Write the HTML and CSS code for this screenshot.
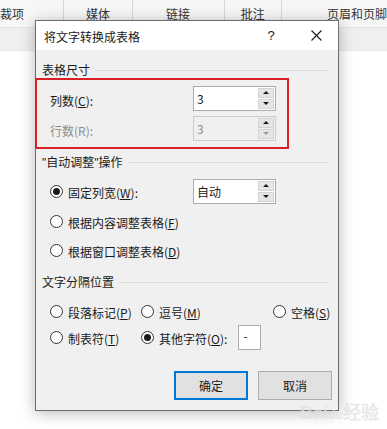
FILE: index.html
```html
<!DOCTYPE html>
<html lang="zh-CN">
<head>
<meta charset="utf-8">
<title>将文字转换成表格</title>
<link rel="stylesheet" href="styles.css">
</head>
<body>
<div class="app">
  <div class="ribbon">
    <div class="tab tab-first">裁项</div>
    <div class="tab tab-media">媒体</div>
    <div class="tab tab-link">链接</div>
    <div class="tab tab-note">批注</div>
    <div class="tab tab-last">页眉和页脚</div>
  </div>
  <div class="ribbon-sub"></div>

  <div class="dialog">
    <div class="titlebar">
      <span class="title">将文字转换成表格</span>
      <span class="help">?</span>
      <span class="close"><svg width="11" height="11" viewBox="0 0 11 11"><path d="M0.5 0.5L10.5 10.5M10.5 0.5L0.5 10.5" stroke="#1a1a1a" stroke-width="1.1" fill="none"/></svg></span>
    </div>
    <div class="content">
      <div class="group-label g1"><span>表格尺寸</span><i class="rule"></i></div>
      <div class="field-row r1">
        <span class="field-label">列数(<u>C</u>):</span>
        <div class="spin">
          <span class="spin-value">3</span>
          <span class="spin-btns"><span class="sb up"></span><span class="sb down"></span></span>
        </div>
      </div>
      <div class="field-row r2 disabled">
        <span class="field-label">行数(R):</span>
        <div class="spin">
          <span class="spin-value">3</span>
          <span class="spin-btns"><span class="sb up"></span><span class="sb down"></span></span>
        </div>
      </div>

      <div class="group-label g2"><span><b class="q">"</b>自动调整<b class="q">"</b>操作</span><i class="rule"></i></div>
      <div class="radio-row first">
        <span class="radio checked"></span><span class="rlabel">固定列宽(<u>W</u>):</span>
        <div class="spin combo">
          <span class="spin-value">自动</span>
          <span class="spin-btns"><span class="sb up"></span><span class="sb down"></span></span>
        </div>
      </div>
      <div class="radio-row second">
        <span class="radio"></span><span class="rlabel">根据内容调整表格(<u>F</u>)</span>
      </div>
      <div class="radio-row third">
        <span class="radio"></span><span class="rlabel">根据窗口调整表格(<u>D</u>)</span>
      </div>

      <div class="group-label g3"><span>文字分隔位置</span><i class="rule"></i></div>
      <div class="sep-grid">
        <div class="cell c1"><span class="radio"></span><span class="rlabel">段落标记(<u>P</u>)</span></div>
        <div class="cell c2"><span class="radio"></span><span class="rlabel">逗号(<u>M</u>)</span></div>
        <div class="cell c3"><span class="radio"></span><span class="rlabel">空格(<u>S</u>)</span></div>
        <div class="cell c1 low"><span class="radio"></span><span class="rlabel">制表符(<u>T</u>)</span></div>
        <div class="cell c2 low wide"><span class="radio checked"></span><span class="rlabel">其他字符(<u>O</u>):</span><span class="char-box">-</span></div>
      </div>

      <div class="buttons">
        <button class="btn default">确定</button>
        <button class="btn">取消</button>
      </div>
    </div>
    <div class="highlight"></div>
  </div>
  <div class="watermark">Bai<span class="paw">du</span>经验</div>
</div>
</body>
</html>
```

FILE: styles.css
```css
html, body {
  margin: 0;
  padding: 0;
  background: #ffffff;
}
body {
  font-family: "Noto Sans CJK SC", "Noto Sans", sans-serif;
  font-size: 12px;
  color: #1a1a1a;
}
.app {
  position: relative;
  width: 387px;
  height: 429px;
  overflow: hidden;
}

/* background ribbon */
.ribbon {
  display: flex;
  height: 28px;
  background: #f7f7f7;
  border-bottom: 1px solid #e4e4e4;
  box-sizing: border-box;
}
.tab {
  height: 28px;
  line-height: 28px;
  color: #333;
  font-size: 12px;
  border-right: 1px solid #d8d8d8;
  box-sizing: border-box;
  text-align: center;
  white-space: nowrap;
}
.tab-first { width: 65px; text-align: left; }
.tab-media { width: 69px; }
.tab-link { width: 93px; }
.tab-note { width: 58px; }
.tab-last { flex: 1; text-align: left; padding-left: 45px; border-right: 0; }
.ribbon-sub {
  height: 22px;
  background: #efefef;
  border-bottom: 1px solid #e6e6e6;
}

/* dialog window */
.dialog {
  position: absolute;
  left: 35px;
  top: 20px;
  width: 304px;
  height: 391px;
  box-sizing: border-box;
  border: 1px solid #6d6d6d;
  background: #f0f0f0;
  box-shadow: 0 2px 14px rgba(0, 0, 0, 0.28);
}
.titlebar {
  height: 29px;
  background: #ffffff;
  display: flex;
  align-items: center;
  padding-left: 8px;
  box-sizing: border-box;
}
.title { flex: 1; font-size: 12px; color: #1a1a1a; padding-top: 1px; }
.help {
  width: 14px;
  text-align: center;
  margin-right: 33px;
  font-size: 13px;
  font-family: "Liberation Sans", sans-serif;
}
.close {
  width: 11px;
  height: 11px;
  margin-right: 16px;
  display: flex;
}

.content {
  padding: 0 6px 0 6px;
  display: flex;
  flex-direction: column;
}
.group-label {
  height: 16px;
  line-height: 16px;
  display: flex;
  align-items: center;
  padding-right: 3px;
}
.group-label span { white-space: nowrap; margin-right: 5px; }
.group-label .q { font-weight: normal; font-family: "Liberation Sans", sans-serif; }
.group-label .rule { flex: 1; height: 1px; background: #dcdcdc; }
.g1 { margin-top: 12px; }
.g2 { margin-top: 13px; }
.g3 { margin-top: 14px; }

.field-row {
  display: flex;
  align-items: center;
  height: 25px;
  padding-left: 8px;
}
.r1 { margin-top: 8px; }
.r2 { margin-top: 5px; }
.field-label { width: 143px; padding-top: 3px; }
.disabled .field-label { color: #8d8d8d; }

.spin {
  width: 83px;
  height: 25px;
  box-sizing: border-box;
  border: 1px solid #acacac;
  background: #ffffff;
  display: flex;
  align-items: center;
  padding: 0 1px 0 3px;
}
.disabled .spin { background: #f0f0f0; border-color: #cccccc; color: #8d8d8d; }
.spin-value { flex: 1; font-size: 12px; }
.spin-btns {
  width: 16px;
  height: 21px;
  display: flex;
  flex-direction: column;
  gap: 1px;
}
.sb {
  flex: 1;
  background: #e5e5e5;
  border: 1px solid #d4d4d4;
  position: relative;
}
.sb::after {
  content: "";
  position: absolute;
  left: 50%;
  top: 50%;
  margin-left: -3px;
  margin-top: -2px;
  border-left: 3px solid transparent;
  border-right: 3px solid transparent;
}
.sb.up::after { border-bottom: 3px solid #1a1a1a; }
.sb.down::after { border-top: 3px solid #1a1a1a; }
.disabled .sb.down::after { border-top-color: #9a9a9a; }

.radio-row {
  display: flex;
  align-items: center;
  padding-left: 8px;
  height: 20px;
}
.radio-row.first { height: 26px; margin-top: 8px; }
.radio-row.second { margin-top: 7px; }
.radio-row.third { margin-top: 9px; }
.radio-row.first .rlabel { width: 125px; }

.radio {
  width: 13px;
  height: 13px;
  box-sizing: border-box;
  border: 1px solid #333333;
  border-radius: 50%;
  background: #ffffff;
  flex: none;
  margin-right: 5px;
  position: relative;
}
.radio.checked::after {
  content: "";
  position: absolute;
  left: 2px;
  top: 2px;
  width: 7px;
  height: 7px;
  border-radius: 50%;
  background: #1a1a1a;
}
.rlabel { white-space: nowrap; padding-top: 2px; }

.sep-grid {
  display: grid;
  grid-template-columns: 91px 132px 60px;
  grid-template-rows: 20px 25px;
  row-gap: 4px;
  padding-left: 8px;
  margin-top: 11px;
}
.cell { display: flex; align-items: center; }
.cell.wide { grid-column: 2 / 4; }
.char-box {
  width: 23px;
  height: 25px;
  box-sizing: border-box;
  border: 1px solid #acacac;
  background: #ffffff;
  margin-left: 11px;
  padding-left: 4px;
  line-height: 20px;
}

.buttons {
  display: flex;
  justify-content: flex-end;
  gap: 10px;
  margin-top: 21px;
}
.btn {
  width: 74px;
  height: 29px;
  box-sizing: border-box;
  border: 1px solid #adadad;
  background: #e1e1e1;
  font-family: "Noto Sans CJK SC", sans-serif;
  font-size: 12px;
  color: #1a1a1a;
  padding: 0;
}
.btn.default { border: 2px solid #0078d7; }

.highlight {
  position: absolute;
  left: -1px;
  top: 57px;
  width: 254px;
  height: 71px;
  box-sizing: border-box;
  border: 2px solid #dc1f26;
}

.watermark {
  position: absolute;
  left: 300px;
  top: 398px;
  font-family: "Liberation Sans", sans-serif;
  font-size: 18px;
  font-weight: bold;
  color: rgba(225, 225, 225, 0.75);
  white-space: nowrap;
}
.paw { font-size: 12px; }
```
